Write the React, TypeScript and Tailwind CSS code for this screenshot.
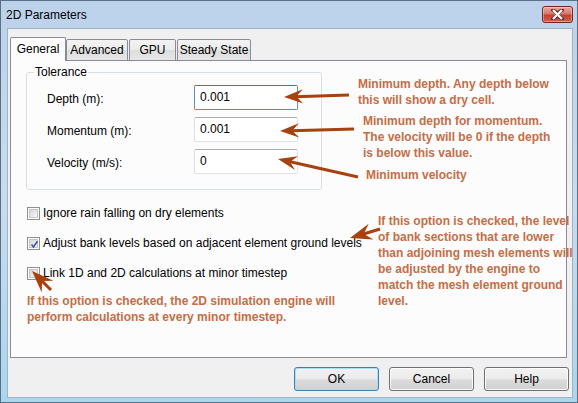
import React from "react";

type Pt = { x: number; y: number };

// callout arrows drawn over the dialog (tip = where the head points)
const ARROWS: { tip: Pt; tail: Pt; head?: number }[] = [
  { tip: { x: 284, y: 97 }, tail: { x: 349, y: 95 } },
  { tip: { x: 280, y: 131 }, tail: { x: 354, y: 129 } },
  { tip: { x: 278, y: 159 }, tail: { x: 358, y: 177 } },
  { tip: { x: 350, y: 238 }, tail: { x: 380, y: 229 }, head: 22 },
  { tip: { x: 32, y: 271 }, tail: { x: 51, y: 290 }, head: 22 },
];

const NOTES: { x: number; y: number; lines: string[] }[] = [
  { x: 358, y: 76, lines: ["Minimum depth. Any depth below", "this will show a dry cell."] },
  { x: 363, y: 113, lines: ["Minimum depth for momentum.", "The velocity will be 0 if the depth", "is below this value."] },
  { x: 366, y: 167, lines: ["Minimum velocity"] },
  {
    x: 378,
    y: 213,
    lines: [
      "If this option is checked, the level",
      "of bank sections that are lower",
      "than adjoining mesh elements will",
      "be adjusted by the engine to",
      "match the mesh element ground",
      "level.",
    ],
  },
  { x: 27, y: 293, lines: ["If this option is checked, the 2D simulation engine will", "perform calculations at every minor timestep."] },
];

const FIELDS = [
  { label: "Depth (m):", value: "0.001", focused: true },
  { label: "Momentum (m):", value: "0.001" },
  { label: "Velocity (m/s):", value: "0" },
];

const OPTIONS = [
  { label: "Ignore rain falling on dry elements", checked: false },
  { label: "Adjust bank levels based on adjacent element ground levels", checked: true },
  { label: "Link 1D and 2D calculations at minor timestep", checked: false },
];

export default function App() {
  return (
    <div className="relative h-[403px] w-[578px] overflow-hidden border border-[#5b6f86] bg-gradient-to-b from-[#bcd2ea] via-[#c9dbee] to-[#a9d6ee] font-['Liberation_Sans',Arial,sans-serif] text-[12px] text-black">
      {/* title bar */}
      <div className="flex h-[27px] items-center justify-between pl-[5px] pr-[4px]">
        <span>2D Parameters</span>
        <CloseButton />
      </div>

      {/* client area */}
      <div className="ml-[6px] h-[370px] w-[566px] border border-[#9fb2c6] bg-[#f0f0f0]">
        <div className="flex h-[32px] items-end pl-[2px]">
          <Tab label="General" width="w-[56px]" active />
          <Tab label="Advanced" width="w-[62px]" />
          <Tab label="GPU" width="w-[47px] ml-[1px]" />
          <Tab label="Steady State" width="w-[74px] ml-[1px]" />
        </div>

        <div className="-mt-px ml-[2px] h-[298px] w-[557px] border border-[#898c95] bg-[#fcfcfc] pl-[15px] pt-[11px]">
          <Tolerance />

          <div className="mt-[15px] flex flex-col gap-[14px] pl-px">
            {OPTIONS.map((o) => (
              <label key={o.label} className="flex h-[16px] items-center gap-[3px]">
                <Checkbox checked={o.checked} />
                <span>{o.label}</span>
              </label>
            ))}
          </div>
        </div>

        <div className="mt-[9px] flex justify-end gap-[10px] pr-[3px]">
          <Button label="OK" primary />
          <Button label="Cancel" />
          <Button label="Help" />
        </div>
      </div>

      {/* annotations laid over the screenshot */}
      {NOTES.map((n) => (
        <div
          key={n.lines[0]}
          className="absolute whitespace-nowrap text-[12px] font-bold leading-[16px] text-[#c66d45]"
          style={{ left: n.x - 1, top: n.y - 1 }}
        >
          {n.lines.map((l) => (
            <div key={l}>{l}</div>
          ))}
        </div>
      ))}

      <svg className="pointer-events-none absolute left-[-1px] top-[-1px]" width={578} height={403}>
        {ARROWS.map((a, i) => (
          <Arrow key={i} {...a} />
        ))}
      </svg>
    </div>
  );
}

function Tolerance() {
  return (
    <div className="relative h-[118px] w-[296px] rounded-[3px] border border-[#d5dfe5] pl-[20px] pt-[12px]">
      <span className="absolute left-[7px] top-[-9px] bg-[#fcfcfc] px-[1px] leading-[16px]">Tolerance</span>
      <div className="flex flex-col gap-[7px]">
        {FIELDS.map((f) => (
          <div key={f.label} className="flex h-[25px] items-center">
            <span className="mt-[2px] w-[147px]">{f.label}</span>
            <div
              className={
                "h-[25px] w-[104px] rounded-[2px] border bg-white pl-[5px] pt-[3px] leading-[16px] " +
                (f.focused
                  ? "border-[#5a8fc0] border-t-[#3d7bad]"
                  : "border-[#e2e3ea] border-t-[#abadb3] border-l-[#dbdfe6]")
              }
            >
              {f.value}
            </div>
          </div>
        ))}
      </div>
    </div>
  );
}

function Tab({ label, width, active }: { label: string; width: string; active?: boolean }) {
  if (active) {
    return (
      <div
        className={`relative z-10 flex h-[24px] items-center justify-center rounded-t-[2px] border border-b-0 border-[#898c95] bg-[#fcfcfc] pb-[1px] ${width}`}
      >
        {label}
      </div>
    );
  }
  return (
    <div
      className={`flex h-[22px] items-center justify-center rounded-t-[2px] border border-[#898c95] bg-[linear-gradient(#f3f3f3_0%,#ebebeb_50%,#dedede_52%,#e6e6e6_100%)] pb-[1px] ${width}`}
    >
      {label}
    </div>
  );
}

function Checkbox({ checked }: { checked: boolean }) {
  return (
    <span className="grid h-[13px] w-[13px] place-items-center border border-[#8f8f8f] bg-white">
      <span className="grid h-[9px] w-[9px] place-items-center border border-[#c6c6c6] bg-gradient-to-br from-[#d6d6d6] to-[#f8f8f8]">
        {checked && (
          <svg width="9" height="9" viewBox="0 0 9 9">
            <path d="M1.5 4.5 L3.5 7 L7.5 1.2" fill="none" stroke="#3a57a0" strokeWidth="1.6" />
          </svg>
        )}
      </span>
    </span>
  );
}

function Button({ label, primary }: { label: string; primary?: boolean }) {
  return (
    <button
      className={
        "h-[24px] w-[85px] rounded-[3px] border bg-[linear-gradient(#f2f2f2_0%,#ebebeb_48%,#dddddd_52%,#cfcfcf_100%)] " +
        (primary ? "border-[#3c7fb1] shadow-[inset_0_0_0_1px_#a9e0f7]" : "border-[#707070] shadow-[inset_0_0_0_1px_#fbfbfb]")
      }
    >
      {label}
    </button>
  );
}

function CloseButton() {
  return (
    <div className="grid h-[17px] w-[31px] place-items-center rounded-[3px] border border-[#6e2a22] bg-[linear-gradient(#e8a59b_0%,#d5766a_48%,#c1402f_52%,#d0614c_100%)] shadow-[inset_0_0_0_1px_rgba(255,255,255,0.35)]">
      <svg width="13" height="11" viewBox="0 0 13 11">
        <path
          d="M2 1 L6.5 4.5 L11 1 M2 10 L6.5 6.5 L11 10"
          fill="none"
          stroke="#5a2a26"
          strokeWidth="3.6"
          strokeLinecap="square"
        />
        <path d="M2 1 L11 10 M11 1 L2 10" fill="none" stroke="#ffffff" strokeWidth="2.2" />
      </svg>
    </div>
  );
}

function Arrow({ tip, tail, head = 19 }: { tip: Pt; tail: Pt; head?: number }) {
  const dx = tail.x - tip.x;
  const dy = tail.y - tip.y;
  const len = Math.hypot(dx, dy);
  const deg = (Math.atan2(dy, dx) * 180) / Math.PI;
  const w = head * 0.75;
  return (
    <g transform={`translate(${tip.x} ${tip.y}) rotate(${deg})`} fill="#a8410f" stroke="none">
      <line x1={head * 0.6} y1={0} x2={len} y2={0} stroke="#a8410f" strokeWidth={3} />
      <polygon points={`0,0 ${head},${-w / 2} ${head * 0.65},0 ${head},${w / 2}`} />
    </g>
  );
}
